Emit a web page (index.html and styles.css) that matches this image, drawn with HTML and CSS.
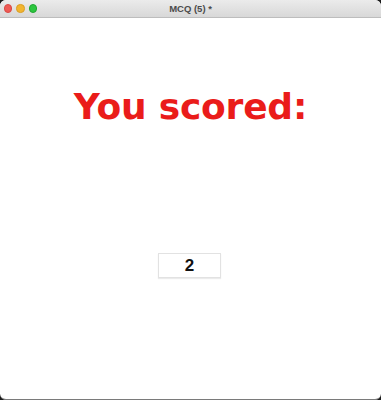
FILE: index.html
```html
<!DOCTYPE html>
<html>
<head>
<meta charset="utf-8">
<link rel="stylesheet" href="styles.css">
</head>
<body>
<div class="window">
  <div class="titlebar">
    <div class="lights">
      <span class="light red"></span>
      <span class="light yellow"></span>
      <span class="light green"></span>
    </div>
    <div class="title">MCQ (5) *</div>
  </div>
  <div class="content">
    <h1 class="heading">You scored:</h1>
    <div class="score">2</div>
  </div>
</div>
</body>
</html>
```

FILE: styles.css
```css
html, body {
  margin: 0;
  padding: 0;
  background: #1c1c1c;
}
body {
  width: 381px;
  height: 400px;
  overflow: hidden;
}
.window {
  width: 381px;
  height: 399px;
  background: #ffffff;
  border-radius: 6px;
  overflow: hidden;
  display: flex;
  flex-direction: column;
  border-bottom: 1px solid #7a7a7a;
}
.titlebar {
  height: 17px;
  flex: 0 0 auto;
  background: linear-gradient(#ebebeb, #d8d8d8);
  border-bottom: 1px solid #bdbdbd;
  display: flex;
  align-items: center;
  position: relative;
}
.lights {
  display: flex;
  gap: 4px;
  padding-left: 3.5px;
}
.light {
  width: 8.5px;
  height: 8.5px;
  border-radius: 50%;
  display: block;
}
.red { background: #ee5a55; border: 0.5px solid #d84a44; box-sizing: border-box; }
.yellow { background: #f2b530; border: 0.5px solid #d89e24; box-sizing: border-box; }
.green { background: #2cc63f; border: 0.5px solid #20a630; box-sizing: border-box; }
.title {
  position: absolute;
  left: 0;
  right: 0;
  text-align: center;
  font-family: "Liberation Sans", Arial, sans-serif;
  font-weight: bold;
  font-size: 9.5px;
  color: #4b4b4b;
}
.content {
  flex: 1;
  display: flex;
  flex-direction: column;
  align-items: center;
}
.heading {
  margin: 68px 0 0 0;
  font-family: "DejaVu Sans", Verdana, sans-serif;
  font-weight: bold;
  font-size: 36px;
  line-height: 42px;
  color: #ea1c1a;
  letter-spacing: -0.2px;
}
.score {
  margin-top: 125px;
  width: 61px;
  height: 23px;
  border: 1px solid #e2e2e2;
  box-shadow: 0 1px 1px rgba(0,0,0,0.08);
  display: flex;
  align-items: center;
  justify-content: center;
  font-family: "Liberation Sans", Arial, sans-serif;
  font-weight: bold;
  font-size: 17px;
  color: #111111;
  margin-left: -2px;
}
```
